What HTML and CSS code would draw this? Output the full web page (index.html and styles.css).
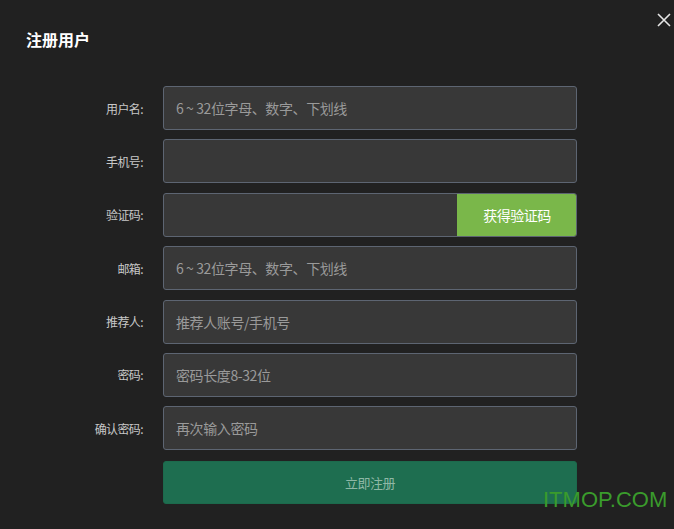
FILE: index.html
```html
<!DOCTYPE html>
<html lang="zh">
<head>
<meta charset="utf-8">
<link rel="stylesheet" href="styles.css">
</head>
<body>
<div class="dialog">
  <button class="close" aria-label="关闭">
    <svg width="14" height="14" viewBox="0 0 14 14"><path d="M1 1L13 13M13 1L1 13" stroke="#e6e6e6" stroke-width="1.6" fill="none"/></svg>
  </button>
  <h1 class="title">注册用户</h1>
  <form class="form">
    <div class="row"><label class="label">用户名:</label><div class="field"><span class="ph">6 ~ 32位字母、数字、下划线</span></div></div>
    <div class="row"><label class="label">手机号:</label><div class="field"></div></div>
    <div class="row"><label class="label">验证码:</label><div class="field split"><div class="code"></div><div class="getcode">获得验证码</div></div></div>
    <div class="row"><label class="label">邮箱:</label><div class="field"><span class="ph">6 ~ 32位字母、数字、下划线</span></div></div>
    <div class="row"><label class="label">推荐人:</label><div class="field"><span class="ph">推荐人账号/手机号</span></div></div>
    <div class="row"><label class="label">密码:</label><div class="field"><span class="ph">密码长度8-32位</span></div></div>
    <div class="row"><label class="label">确认密码:</label><div class="field"><span class="ph">再次输入密码</span></div></div>
    <div class="row submitrow"><span class="label"></span><div class="submit">立即注册</div></div>
  </form>
  <div class="watermark">ITMOP.COM</div>
</div>
</body>
</html>
```

FILE: styles.css
```css
html, body {
  margin: 0;
  padding: 0;
  background: #212121;
}
body {
  width: 674px;
  height: 529px;
  overflow: hidden;
  font-family: "Noto Sans CJK SC", "Microsoft YaHei", sans-serif;
}
.dialog {
  position: relative;
  width: 674px;
  height: 529px;
  box-sizing: border-box;
  padding-top: 28px;
}
.close {
  position: absolute;
  right: 2px;
  top: 12px;
  width: 16px;
  height: 16px;
  padding: 0;
  border: 0;
  background: none;
  display: flex;
  align-items: center;
  justify-content: center;
}
.title {
  margin: 0 0 0 26px;
  font-size: 16px;
  font-weight: bold;
  color: #ffffff;
  line-height: 22px;
  letter-spacing: 0;
}
.form {
  margin-top: 36px;
  display: flex;
  flex-direction: column;
  gap: 9.4px;
}
.row {
  display: flex;
  align-items: center;
  height: 44px;
}
.label {
  width: 143px;
  box-sizing: border-box;
  text-align: right;
  font-size: 12px;
  color: #c8c8c8;
  letter-spacing: -0.6px;
  margin-right: 20px;
}
.field {
  width: 414px;
  height: 44px;
  box-sizing: border-box;
  border: 1px solid #5d6572;
  border-radius: 3px;
  background: #383838;
  display: flex;
  align-items: center;
  padding-left: 12px;
}
.ph {
  font-size: 14px;
  color: #9a9a9a;
  letter-spacing: -0.4px;
  white-space: pre;
}
.split {
  padding-left: 0;
  overflow: hidden;
}
.code {
  flex: 1;
  height: 100%;
}
.getcode {
  width: 120px;
  height: 44px;
  margin: -1px -1px -1px 0;
  background: #7ab74a;
  border-radius: 0 3px 3px 0;
  color: #ffffff;
  font-size: 14px;
  display: flex;
  align-items: center;
  justify-content: center;
  letter-spacing: -0.5px;
}
.submitrow {
  margin-top: 1.5px;
  height: 43px;
}
.submit {
  width: 414px;
  height: 43px;
  box-sizing: border-box;
  background: #1e6e50;
  border: 1px solid #1c6a4c;
  border-radius: 3px;
  color: #8fb8a6;
  font-size: 13px;
  display: flex;
  align-items: center;
  justify-content: center;
  letter-spacing: -0.5px;
}
.watermark {
  position: absolute;
  left: 543px;
  top: 487px;
  font-family: "Liberation Sans", Arial, sans-serif;
  font-size: 22px;
  color: #3a9b2c;
  letter-spacing: 0;
}
```
